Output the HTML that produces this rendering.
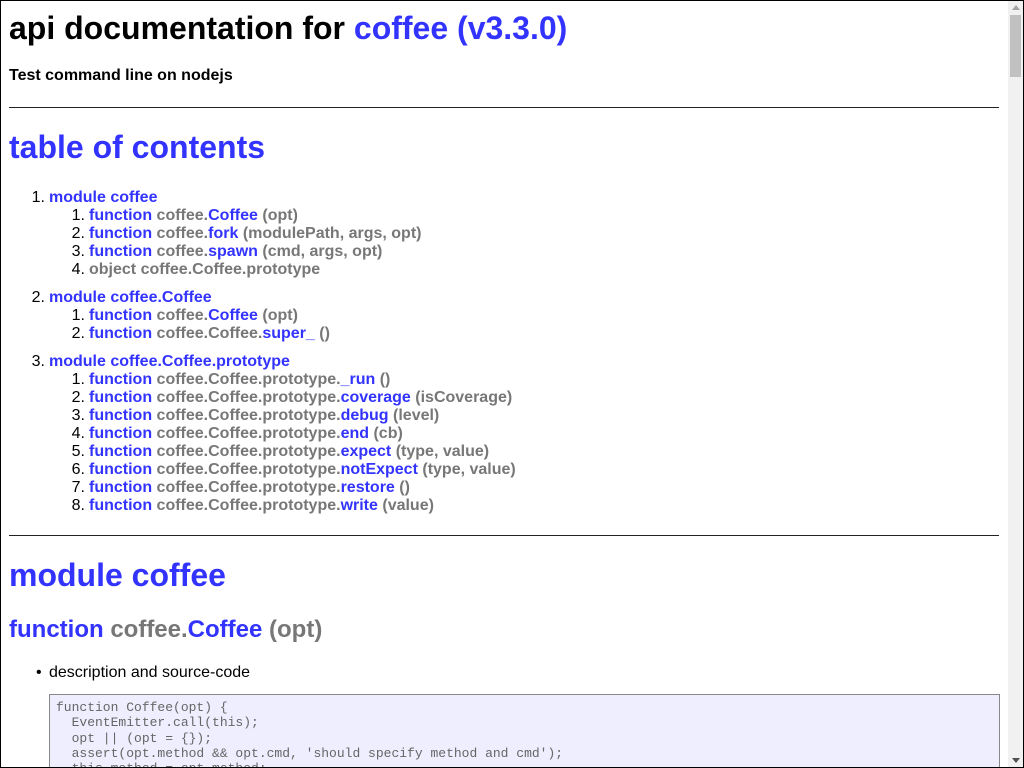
<!DOCTYPE html>
<html><head><meta charset="utf-8"><style>
html,body{margin:0;padding:0;overflow:hidden;}
#w{position:relative;width:1022px;height:766px;border:1px solid #000;overflow:hidden;background:#fff;font-family:"Liberation Sans",sans-serif;color:#000}
.a{position:absolute;white-space:nowrap}
.b{color:#33f}.g{color:#777}
.h1{font-size:32px;font-weight:bold;line-height:36px;left:8px}
.li{font-size:16px;font-weight:bold;line-height:18px}
.n{position:absolute;font-weight:normal;color:#000;text-align:right;width:30px}
hr{position:absolute;left:8px;width:990px;margin:0;border:0;border-top:1px solid #222;height:0}
#sb{position:absolute;right:0;top:0;width:15px;height:766px;background:#f1f1f1}
#th{position:absolute;right:2px;top:14px;width:11px;height:62px;background:#c1c1c1}
pre{position:absolute;left:48px;top:693px;width:937px;height:70px;margin:0;padding:5px 6px;background:#eef;border:1px solid #888;font-family:"Liberation Mono",monospace;font-size:13px;line-height:15.3px;color:#666;overflow:hidden}
</style></head><body><div id="w">
<div class="a h1" style="top:9px">api documentation for <span class="b">coffee (v3.3.0)</span></div>
<div class="a" style="left:8px;top:66px;font-size:16px;font-weight:bold;line-height:18px">Test command line on nodejs</div>
<hr style="top:106px">
<div class="a h1 b" style="top:128px">table of contents</div>

<div class="a li" style="left:48px;top:188px"><span class="n" style="left:-34px">1.</span><span class="b">module coffee</span></div>
<div class="a li" style="left:88px;top:206px"><span class="n" style="left:-34px">1.</span><span class="b">function</span> <span class="g">coffee.</span><span class="b">Coffee</span> <span class="g">(opt)</span></div>
<div class="a li" style="left:88px;top:224px"><span class="n" style="left:-34px">2.</span><span class="b">function</span> <span class="g">coffee.</span><span class="b">fork</span> <span class="g">(modulePath, args, opt)</span></div>
<div class="a li" style="left:88px;top:242px"><span class="n" style="left:-34px">3.</span><span class="b">function</span> <span class="g">coffee.</span><span class="b">spawn</span> <span class="g">(cmd, args, opt)</span></div>
<div class="a li" style="left:88px;top:260px"><span class="n" style="left:-34px">4.</span><span class="g">object coffee.Coffee.prototype</span></div>

<div class="a li" style="left:48px;top:288px"><span class="n" style="left:-34px">2.</span><span class="b">module coffee.Coffee</span></div>
<div class="a li" style="left:88px;top:306px"><span class="n" style="left:-34px">1.</span><span class="b">function</span> <span class="g">coffee.</span><span class="b">Coffee</span> <span class="g">(opt)</span></div>
<div class="a li" style="left:88px;top:324px"><span class="n" style="left:-34px">2.</span><span class="b">function</span> <span class="g">coffee.Coffee.</span><span class="b">super_</span> <span class="g">()</span></div>

<div class="a li" style="left:48px;top:352px"><span class="n" style="left:-34px">3.</span><span class="b">module coffee.Coffee.prototype</span></div>
<div class="a li" style="left:88px;top:370px"><span class="n" style="left:-34px">1.</span><span class="b">function</span> <span class="g">coffee.Coffee.prototype.</span><span class="b">_run</span> <span class="g">()</span></div>
<div class="a li" style="left:88px;top:388px"><span class="n" style="left:-34px">2.</span><span class="b">function</span> <span class="g">coffee.Coffee.prototype.</span><span class="b">coverage</span> <span class="g">(isCoverage)</span></div>
<div class="a li" style="left:88px;top:406px"><span class="n" style="left:-34px">3.</span><span class="b">function</span> <span class="g">coffee.Coffee.prototype.</span><span class="b">debug</span> <span class="g">(level)</span></div>
<div class="a li" style="left:88px;top:424px"><span class="n" style="left:-34px">4.</span><span class="b">function</span> <span class="g">coffee.Coffee.prototype.</span><span class="b">end</span> <span class="g">(cb)</span></div>
<div class="a li" style="left:88px;top:442px"><span class="n" style="left:-34px">5.</span><span class="b">function</span> <span class="g">coffee.Coffee.prototype.</span><span class="b">expect</span> <span class="g">(type, value)</span></div>
<div class="a li" style="left:88px;top:460px"><span class="n" style="left:-34px">6.</span><span class="b">function</span> <span class="g">coffee.Coffee.prototype.</span><span class="b">notExpect</span> <span class="g">(type, value)</span></div>
<div class="a li" style="left:88px;top:478px"><span class="n" style="left:-34px">7.</span><span class="b">function</span> <span class="g">coffee.Coffee.prototype.</span><span class="b">restore</span> <span class="g">()</span></div>
<div class="a li" style="left:88px;top:496px"><span class="n" style="left:-34px">8.</span><span class="b">function</span> <span class="g">coffee.Coffee.prototype.</span><span class="b">write</span> <span class="g">(value)</span></div>

<hr style="top:534px">
<div class="a h1 b" style="top:556px">module coffee</div>
<div class="a" style="left:8px;top:615px;font-size:24px;font-weight:bold;line-height:28px"><span class="b">function</span> <span class="g">coffee.</span><span class="b">Coffee</span> <span class="g">(opt)</span></div>
<div class="a" style="left:48px;top:663px;font-size:16px;line-height:18px"><span style="position:absolute;left:-13px">•</span>description and source-code</div>
<pre>function Coffee(opt) {
  EventEmitter.call(this);
  opt || (opt = {});
  assert(opt.method &amp;&amp; opt.cmd, 'should specify method and cmd');
  this.method = opt.method;</pre>
<div id="sb"><div id="th"></div><div style="position:absolute;left:4px;bottom:4px;width:0;height:0;border-left:4px solid transparent;border-right:4px solid transparent;border-top:5px solid #505050"></div><div style="position:absolute;left:4px;top:4px;width:0;height:0;border-left:4px solid transparent;border-right:4px solid transparent;border-bottom:5px solid #a3a3a3"></div></div>
</div></body></html>
